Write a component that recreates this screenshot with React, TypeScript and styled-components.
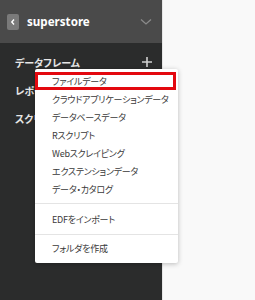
import React from "react";
import styled, { createGlobalStyle } from "styled-components";

const Global = createGlobalStyle`
  html, body { margin: 0; padding: 0; }
  body {
    width: 255px; height: 300px; overflow: hidden;
    background: #f9f9f9;
    font-family: "Noto Sans CJK JP", "Noto Sans", sans-serif;
  }
`;

const Page = styled.div`
  position: relative;
  display: flex;
  width: 255px;
  height: 300px;
`;

const Sidebar = styled.aside`
  width: 162px;
  height: 300px;
  background: #2b2c2c;
  border-right: 1px solid #e6e6e6;
  display: flex;
  flex-direction: column;
`;

const Header = styled.div`
  height: 43px;
  background: #4a4a4a;
  display: flex;
  align-items: center;
  padding: 0 10px 0 7px;
  gap: 8px;
  box-sizing: border-box;
`;

const BackBox = styled.div`
  width: 12px;
  height: 16px;
  border-radius: 2px;
  background: #7a7a7a;
  display: flex;
  align-items: center;
  justify-content: center;
`;

const Title = styled.div`
  flex: 1;
  color: #ffffff;
  font-family: "Noto Sans", "Liberation Sans", sans-serif;
  font-weight: 700;
  font-size: 11.6px;
  margin-top: -1px;
`;

const Nav = styled.div`
  display: flex;
  flex-direction: column;
  padding: 5px 10px 0 15px;
`;

const NavRow = styled.div`
  height: 28px;
  display: flex;
  align-items: center;
  justify-content: space-between;
  color: #e6e6e6;
  font-weight: 700;
  font-size: 10px;
  font-feature-settings: "palt";
`;

const Menu = styled.div`
  position: absolute;
  left: 35px;
  top: 69px;
  width: 143px;
  background: #ffffff;
  border-radius: 2px;
  box-shadow: 0 1px 5px rgba(0, 0, 0, 0.25);
  display: flex;
  flex-direction: column;
`;

const Group = styled.div<{ $pt: number; $pb: number }>`
  padding: ${(p) => p.$pt}px 0 ${(p) => p.$pb}px;
  display: flex;
  flex-direction: column;
`;

const Divider = styled.div`
  height: 1px;
  background: #e4e4e4;
`;

const Item = styled.div<{ $selected?: boolean }>`
  height: 18px;
  display: flex;
  align-items: center;
  padding-left: 17px;
  box-sizing: border-box;
  color: #3a3a3a;
  font-size: 9px;
  letter-spacing: -0.25px;
  font-feature-settings: "palt";
  white-space: nowrap;
  ${(p) =>
    p.$selected &&
    `
    border: 3px solid #e3080f;
    padding-left: 14px;
    margin: 0 2px 0 0;
  `}
`;

export default function App() {
  return (
    <>
      <Global />
      <Page>
        <Sidebar>
          <Header>
            <BackBox>
              <svg width="6" height="8" viewBox="0 0 6 8">
                <path d="M4 1.5 L1.8 4 L4 6.5" stroke="#fff" strokeWidth="1.4" fill="none" />
              </svg>
            </BackBox>
            <Title>superstore</Title>
            <svg width="12" height="8" viewBox="0 0 12 8">
              <path d="M1 1.5 L6 6 L11 1.5" stroke="#8a8a8a" strokeWidth="1.3" fill="none" />
            </svg>
          </Header>
          <Nav>
            <NavRow>
              <span>データフレーム</span>
              <svg width="10" height="10" viewBox="0 0 10 10">
                <path d="M5 0 V10 M0 5 H10" stroke="#d0d0d0" strokeWidth="1.6" />
              </svg>
            </NavRow>
            <NavRow>
              <span>レポート</span>
            </NavRow>
            <NavRow>
              <span>スクリプト</span>
            </NavRow>
          </Nav>
        </Sidebar>
        <Menu>
          <Group $pt={3} $pb={5}>
            <Item $selected>ファイルデータ</Item>
            <Item>クラウドアプリケーションデータ</Item>
            <Item>データベースデータ</Item>
            <Item>Rスクリプト</Item>
            <Item>Webスクレイピング</Item>
            <Item>エクステンションデータ</Item>
            <Item>データ・カタログ</Item>
          </Group>
          <Divider />
          <Group $pt={6} $pb={6}>
            <Item>EDFをインポート</Item>
          </Group>
          <Divider />
          <Group $pt={4} $pb={6}>
            <Item>フォルダを作成</Item>
          </Group>
        </Menu>
      </Page>
    </>
  );
}
